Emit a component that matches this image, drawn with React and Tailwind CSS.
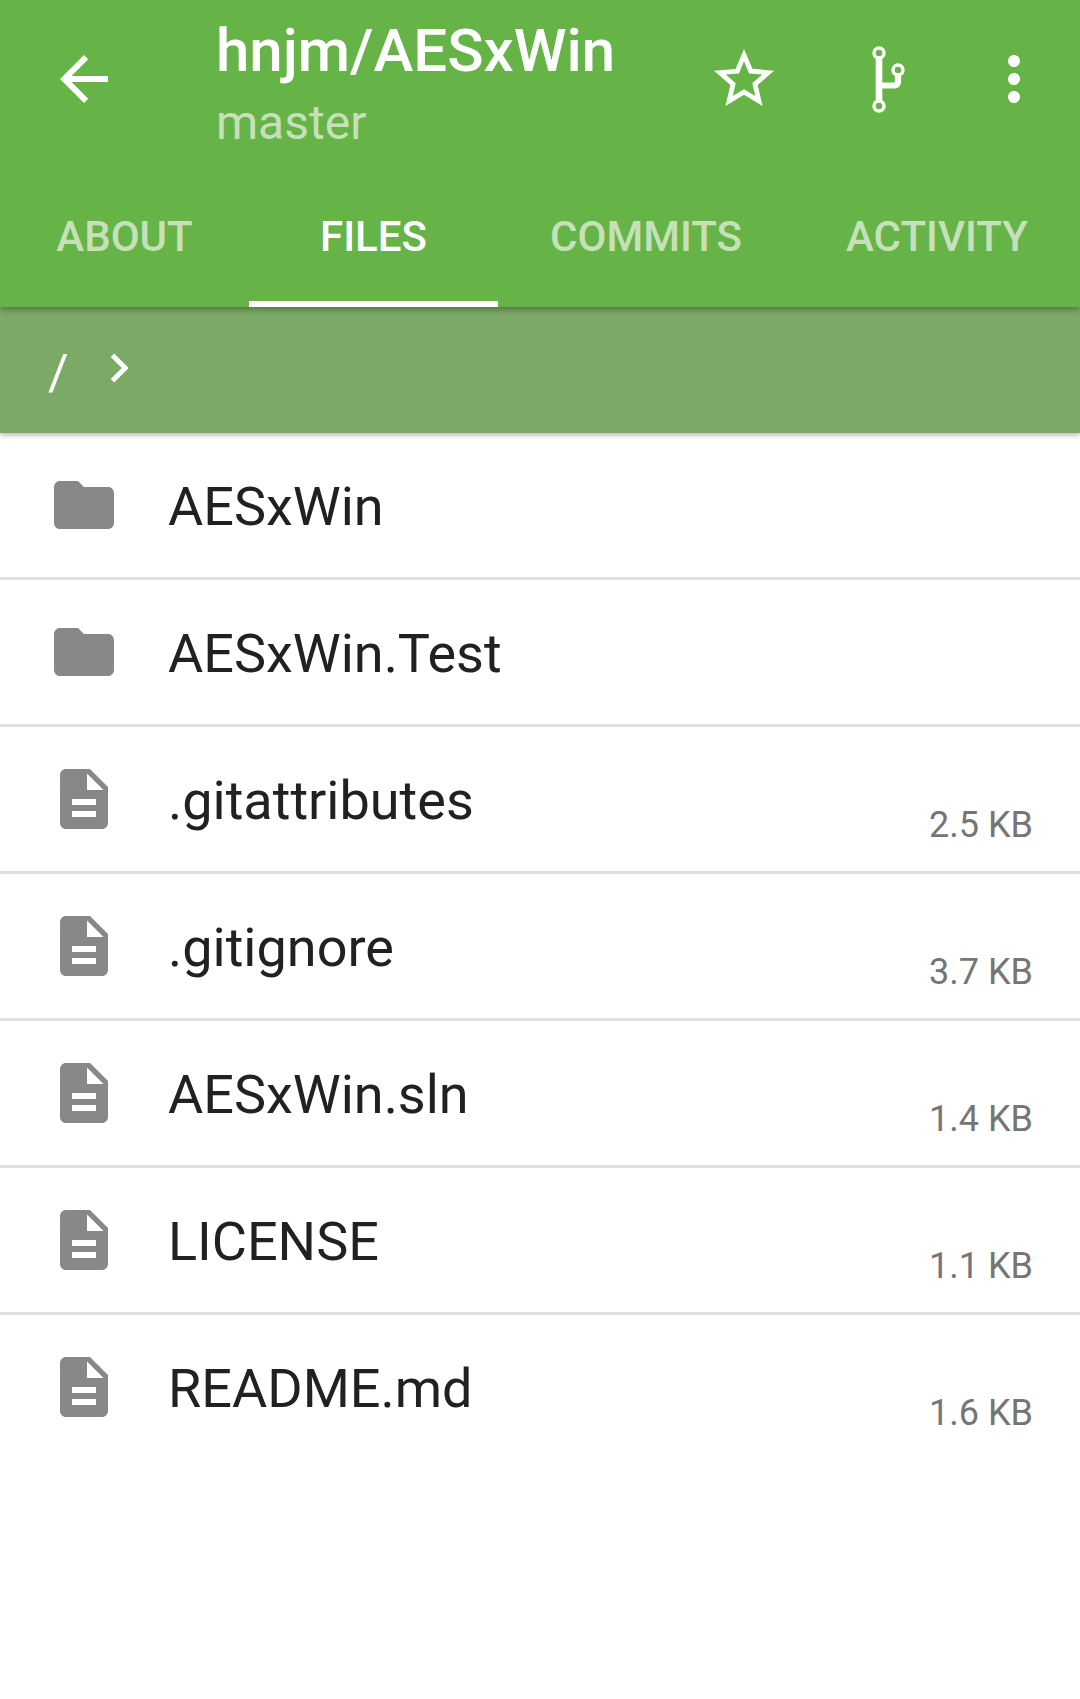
import React from "react";

const files = [
  { name: "AESxWin", folder: true },
  { name: "AESxWin.Test", folder: true },
  { name: ".gitattributes", size: "2.5 KB" },
  { name: ".gitignore", size: "3.7 KB" },
  { name: "AESxWin.sln", size: "1.4 KB" },
  { name: "LICENSE", size: "1.1 KB" },
  { name: "README.md", size: "1.6 KB", last: true },
];

function Md({ d, className }) {
  return (
    <svg viewBox="0 0 24 24" className={className} fill="currentColor">
      <path d={d} />
    </svg>
  );
}

const FOLDER = "M10 4H4c-1.1 0-2 .9-2 2v12c0 1.1.9 2 2 2h16c1.1 0 2-.9 2-2V8c0-1.1-.9-2-2-2h-8l-2-2z";
const FILE = "M14 2H6c-1.1 0-1.99.9-1.99 2L4 20c0 1.1.89 2 1.99 2H18c1.1 0 2-.9 2-2V8l-6-6zm2 16H8v-2h8v2zm0-4H8v-2h8v2zm-3-5V3.5L18.5 9H13z";

function BranchIcon() {
  return (
    <svg viewBox="0 0 72 72" className="w-[72px] h-[72px] shrink-0 text-white" fill="none" stroke="currentColor">
      <circle cx="36" cy="10" r="5" strokeWidth="3.4" />
      <circle cx="36" cy="63" r="5" strokeWidth="3.4" />
      <circle cx="55" cy="27" r="5" strokeWidth="3.4" />
      <path d="M36 14V59" strokeWidth="6.6" />
      <path d="M36 42.5H51C53.5 42.5 55 41 55 38.5V31" strokeWidth="6.2" />
    </svg>
  );
}

function Tab({ label, width, active }) {
  return (
    <div className={`${width} h-[144px] flex items-center justify-center border-b-[6px] pt-[10px] ${active ? "border-white text-white" : "border-transparent text-[#c6e1ba]"}`}>
      <span className="text-[42px] font-medium leading-none">{label}</span>
    </div>
  );
}

function Row({ file }) {
  return (
    <div className={`h-[147px] flex pl-12 pr-[47px] ${file.last ? "" : "border-b-[3px] border-[#e0e0e0]"}`}>
      <div className="h-[144px] flex items-center">
        <Md d={file.folder ? FOLDER : FILE} className="w-[72px] h-[72px] text-[#888888]" />
      </div>
      <div className="ml-12 flex-1 h-[144px] pt-1 flex items-center text-[54px] text-[#212121] leading-none">{file.name}</div>
      {file.size && <div className="pt-[77px] text-[36px] text-[#757575] leading-[42px]">{file.size}</div>}
    </div>
  );
}

export default function App() {
  return (
    <div className="min-h-[1699px] bg-white font-['Roboto',sans-serif]">
      <div className="relative z-20 bg-[#66b447] h-[307px] shadow-[0_3px_6px_rgba(0,0,0,0.3)]">
        <div className="h-[163px] flex pl-[48px] pr-[30px] text-white">
          <div className="pt-[43px]">
            <Md d="M20 11H7.83l5.59-5.59L12 4l-8 8 8 8 1.41-1.41L7.83 13H20v-2z" className="w-[72px] h-[72px]" />
          </div>
          <div className="ml-[96px] flex-1 pt-[16px]">
            <div className="text-[60px] font-medium leading-[70px]">hnjm/AESxWin</div>
            <div className="text-[48px] leading-[56px] mt-[9px] text-[#c6e1ba]">master</div>
          </div>
          <div className="pt-[43px] flex gap-[63px]">
            <Md d="M22 9.24l-7.19-.62L12 2 9.19 8.63 2 9.24l5.46 4.73L5.82 21 12 17.27 18.18 21l-1.63-7.03L22 9.24zM12 15.4l-3.76 2.27 1-4.28-3.32-2.88 4.38-.38L12 6.1l1.71 4.04 4.38.38-3.32 2.88 1 4.28L12 15.4z" className="w-[72px] h-[72px]" />
            <BranchIcon />
            <Md d="M12 8c1.1 0 2-.9 2-2s-.9-2-2-2-2 .9-2 2 .9 2 2 2zm0 2c-1.1 0-2 .9-2 2s.9 2 2 2 2-.9 2-2-.9-2-2-2zm0 6c-1.1 0-2 .9-2 2s.9 2 2 2 2-.9 2-2-.9-2-2-2z" className="w-[72px] h-[72px]" />
          </div>
        </div>
        <div className="flex">
          <Tab label="ABOUT" width="w-[249px]" />
          <Tab label="FILES" width="w-[249px]" active />
          <Tab label="COMMITS" width="w-[296px]" />
          <Tab label="ACTIVITY" width="w-[286px]" />
        </div>
      </div>

      <div className="relative z-10 bg-[#7baa66] h-[126px] shadow-[0_2px_5px_rgba(0,0,0,0.3)] flex items-center text-white pl-[48px]">
        <span className="text-[50px] leading-none pt-[5px]">/</span>
        <Md d="M10 6L8.59 7.41 13.17 12l-4.58 4.59L10 18l6-6z" className="ml-[21px] w-[58px] h-[58px] -mt-1" />
      </div>

      <div>
        {files.map((f) => (
          <Row key={f.name} file={f} />
        ))}
      </div>
    </div>
  );
}
